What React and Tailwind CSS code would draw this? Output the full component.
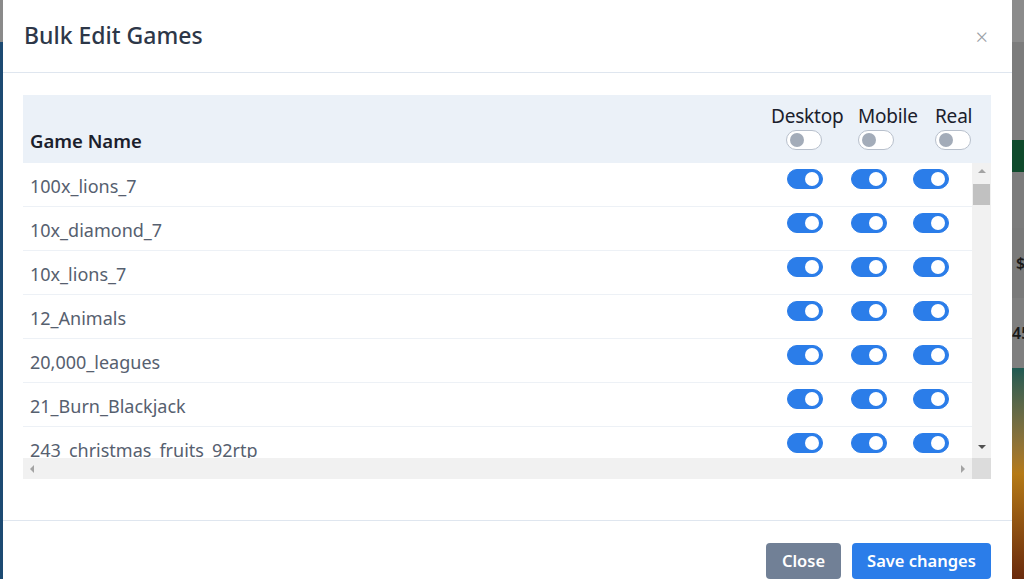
import React, { useState } from 'react';

const games = [
  '100x_lions_7',
  '10x_diamond_7',
  '10x_lions_7',
  '12_Animals',
  '20,000_leagues',
  '21_Burn_Blackjack',
  '243_christmas_fruits_92rtp',
  '25_Coins',
];

function Switch({ on, onClick }) {
  return (
    <button
      onClick={onClick}
      className={`relative w-[36px] h-[20px] rounded-full border shrink-0 ${
        on ? 'bg-[#2b7de9] border-[#2b7de9]' : 'bg-white border-[#b8c0cc]'
      }`}
    >
      <span
        className={`absolute top-1/2 -translate-y-1/2 w-[14px] h-[14px] rounded-full ${
          on ? 'right-[3px] bg-white' : 'left-[3px] bg-[#a3acb9]'
        }`}
      />
    </button>
  );
}

export default function App() {
  const [rows, setRows] = useState(games.map(() => [true, true, true]));

  const flip = (i, j) => {
    setRows(rows.map((r, ri) => (ri === i ? r.map((v, vi) => (vi === j ? !v : v)) : r)));
  };

  return (
    <div
      className="w-[1024px] h-[579px] overflow-hidden flex bg-[#7a7a7a]"
      style={{ fontFamily: '"Noto Sans", "Open Sans", sans-serif' }}
    >
      {/* backdrop, left */}
      <div className="w-[3px] flex flex-col">
        <div className="h-[42px] bg-[#8a8a8a]" />
        <div className="flex-1 bg-[#1c4a72]" />
      </div>

      {/* modal */}
      <div className="w-[1009px] h-full bg-white flex flex-col">
        <div className="h-[73px] shrink-0 flex items-center justify-between pl-[21px] pr-[24px] pb-[1px] border-b border-[#dfe6ef]">
          <h5 className="text-[23px] font-medium text-[#2d3748]">Bulk Edit Games</h5>
          <button className="text-[#9aa0a6] text-[22px] leading-none font-light">×</button>
        </div>

        <div className="pt-[22px] pb-[41px] pl-[20px] pr-[21px] border-b border-[#dfe6ef]">
          <div className="w-[968px]">
            <div className="h-[68px] bg-[#ebf1f8] flex items-end pb-[10px]">
              <div className="flex-1 pl-[7px] pb-[2px] text-[18.5px] leading-[20px] font-semibold text-[#1a202c]">
                Game Name
              </div>
              <div className="w-[219px] flex text-[19px] leading-[22px] text-[#1a202c]">
                {['Desktop', 'Mobile', 'Real'].map((label, j) => (
                  <div
                    key={label}
                    className={`flex flex-col ${j === 0 ? 'w-[87px] -ml-[1px]' : j === 1 ? 'w-[77px]' : 'w-[55px]'}`}
                  >
                    <span className="whitespace-nowrap -tracking-[0.2px]">{label}</span>
                    <div className={`mt-[3px] ${j === 0 ? 'pl-[15px]' : ''}`}>
                      <Switch on={false} />
                    </div>
                  </div>
                ))}
              </div>
            </div>

            <div className="flex">
              <div className="flex-1 h-[295px] overflow-hidden">
                {games.map((g, i) => (
                  <div key={g} className="h-[44px] flex border-b border-[#edf1f6]">
                    <div className="flex-1 pl-[7px] pt-[4px] flex items-center text-[18px] text-[#56606f]">{g}</div>
                    <div className="flex pt-[6px] gap-[28px] mr-[23px]">
                      <Switch on={rows[i][0]} onClick={() => flip(i, 0)} />
                      <div className="flex gap-[26px]">
                        <Switch on={rows[i][1]} onClick={() => flip(i, 1)} />
                        <Switch on={rows[i][2]} onClick={() => flip(i, 2)} />
                      </div>
                    </div>
                  </div>
                ))}
              </div>
              <div className="w-[19px] h-[295px] bg-[#f1f1f1] flex flex-col items-center">
                <div className="mt-[6px] w-0 h-0 border-l-[4px] border-r-[4px] border-b-[4px] border-l-transparent border-r-transparent border-b-[#a3a3a3]" />
                <div className="mt-[11px] w-[17px] h-[21px] bg-[#c1c1c1]" />
                <div className="flex-1" />
                <div className="mb-[9px] w-0 h-0 border-l-[4px] border-r-[4px] border-t-[4px] border-l-transparent border-r-transparent border-t-[#505050]" />
              </div>
            </div>

            <div className="flex h-[21px]">
              <div className="flex-1 bg-[#f1f1f1] flex items-center justify-between px-[7px]">
                <div className="w-0 h-0 border-t-[4px] border-b-[4px] border-r-[4px] border-t-transparent border-b-transparent border-r-[#a3a3a3]" />
                <div className="w-0 h-0 border-t-[4px] border-b-[4px] border-l-[4px] border-t-transparent border-b-transparent border-l-[#a3a3a3]" />
              </div>
              <div className="w-[19px] bg-[#dcdcdc]" />
            </div>
          </div>
        </div>

        <div className="flex justify-end gap-[11px] pt-[22px] pr-[21px]">
          <button className="h-[36px] w-[75px] rounded-[4px] bg-[#718096] text-white text-[16.5px] font-semibold">
            Close
          </button>
          <button className="h-[36px] w-[139px] rounded-[4px] bg-[#2b7de9] text-white text-[16.5px] font-semibold">
            Save changes
          </button>
        </div>
      </div>

      {/* backdrop, right */}
      <div className="flex-1 flex flex-col text-[#1a1a1a] text-[16px] font-semibold overflow-hidden">
        <div className="h-[42px] bg-[#8b8b8b]" />
        <div className="h-[98px] bg-[#7c7c7c]" />
        <div className="h-[32px] bg-[#0f4a2c]" />
        <div className="h-[56px] bg-[#7c7c7c]" />
        <div className="h-[70px] bg-[#7a7a7a] flex items-center pl-[4px]">$</div>
        <div className="h-[70px] bg-[#7f7f7f] flex items-center">45</div>
        <div className="flex-1 bg-gradient-to-b from-[#1e5a52] via-[#b57a16] to-[#6a2a0c]" />
      </div>
    </div>
  );
}
